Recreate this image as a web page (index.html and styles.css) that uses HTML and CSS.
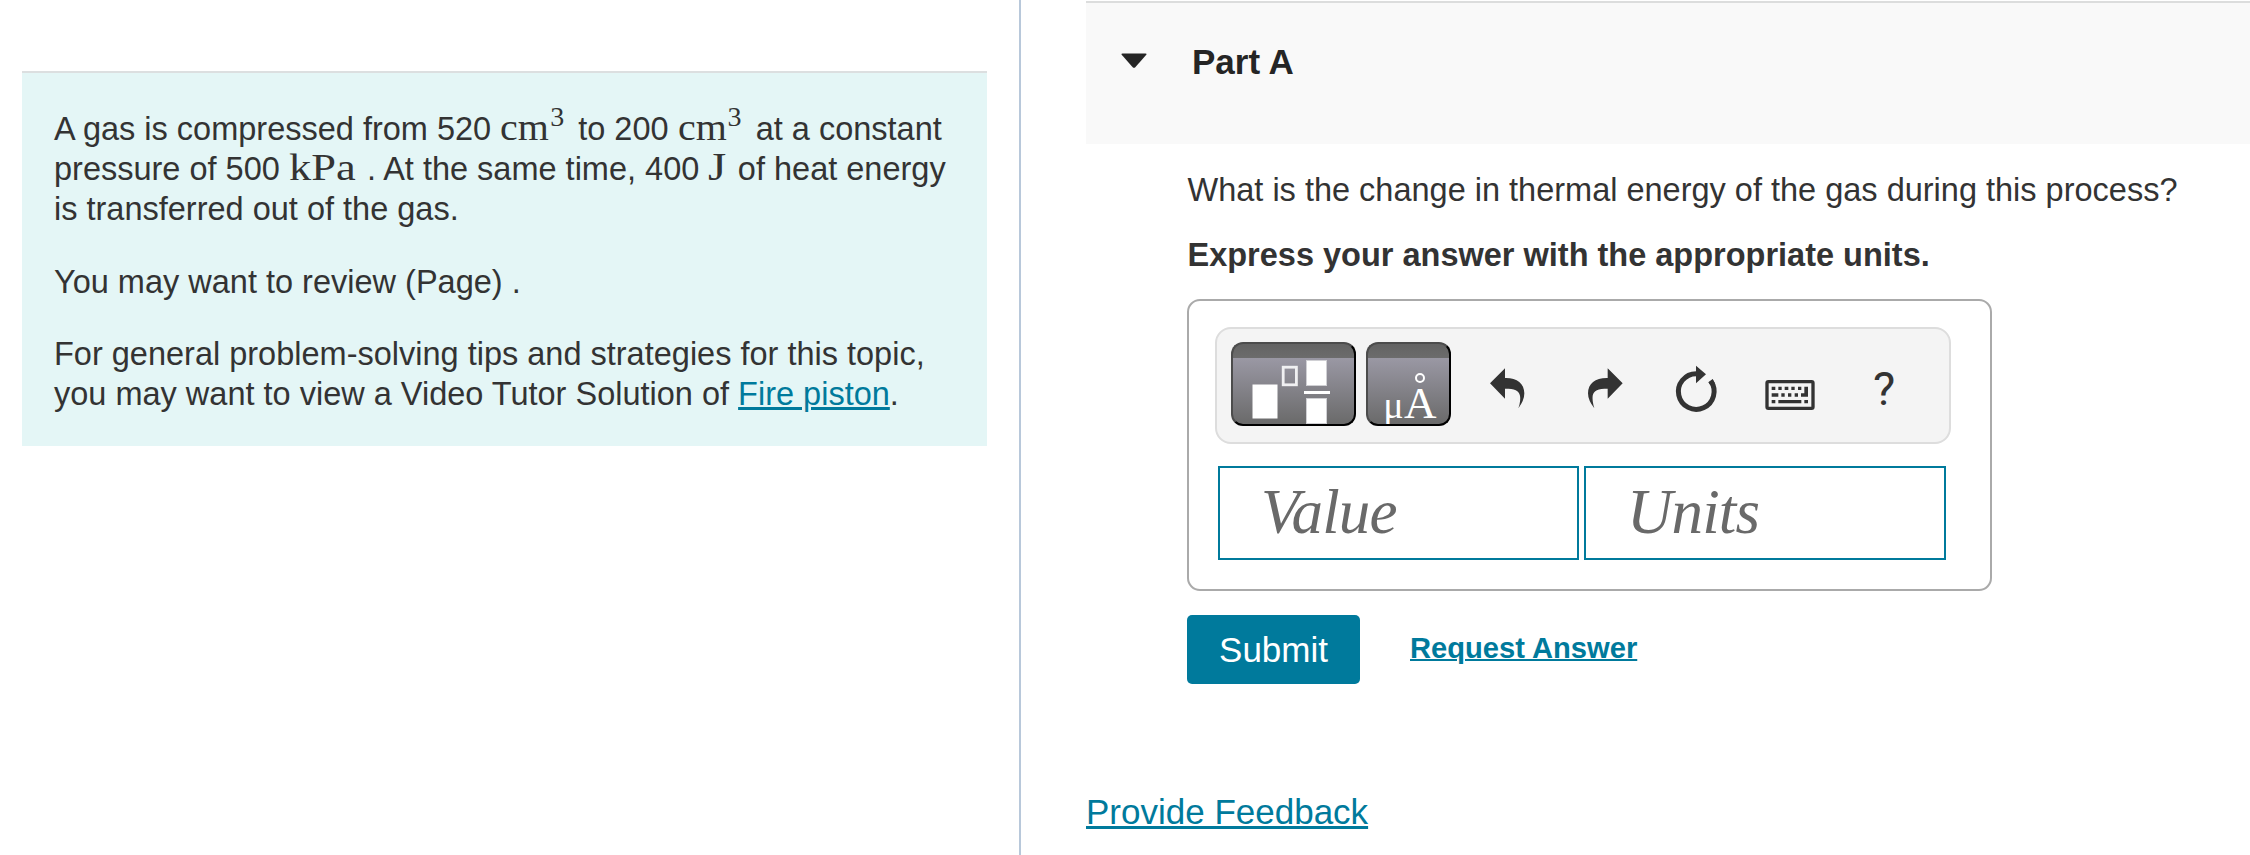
FILE: index.html
```html
<!DOCTYPE html>
<html lang="en">
<head>
<meta charset="utf-8">
<title>Part A</title>
<link rel="stylesheet" href="styles.css">
</head>
<body>
<main class="page">
  <aside class="left">
    <section class="intro">
      <p>A gas is compressed from 520 <span class="math cm"><span>cm</span><sup>3</sup></span> to 200 <span class="math cm"><span>cm</span><sup>3</sup></span> at a constant<br>pressure of 500 <span class="math kpa"><span>kPa</span></span> . At the same time, 400 <span class="math joule"><span>J</span></span> of heat energy<br>is transferred out of the gas.</p>
      <p>You may want to review (Page) .</p>
      <p>For general problem-solving tips and strategies for this topic,<br>you may want to view a Video Tutor Solution of <a href="#">Fire piston</a>.</p>
    </section>
  </aside>
  <section class="right">
    <header class="part-head">
      <svg class="caret" width="26" height="16" viewBox="0 0 26 16"><path d="M1.5 0.5h23q1.8 0 .6 1.6L14.3 14.2q-1.3 1.2-2.6 0L.9 2.1Q-.3.5 1.5.5z" fill="#252525"/></svg>
      <h2>Part A</h2>
    </header>
    <div class="part-body">
      <p class="question">What is the change in thermal energy of the gas during this process?</p>
      <p class="instruction">Express your answer with the appropriate units.</p>
      <div class="answer">
        <div class="toolbar">
          <button class="tool templates" aria-label="Templates">
            <svg width="121" height="80" viewBox="2 2 121 80">
              <g fill="#fff" stroke="#d0d0d4" stroke-width="1">
                <rect x="21.5" y="42.5" width="25" height="34" stroke="none"/>
                <rect x="75.5" y="18.5" width="20" height="25"/>
                <rect x="75.5" y="56.5" width="20" height="25"/>
              </g>
              <rect x="73" y="49" width="26" height="3" fill="#fff"/>
              <rect x="52.2" y="25.2" width="13.2" height="17.6" fill="none" stroke="#f0f0f2" stroke-width="2.8"/>
            </svg>
          </button>
          <button class="tool symbols" aria-label="Symbols"><span class="mu">μ</span><span class="ang">A<i></i></span></button>
          <svg class="icon undo" viewBox="60 66 180 252"><path d="M90 190L135 145V174C170 173 193 190 193 220Q193 241 175 265Q183 242 180 227C177 211 164 206 135 206V236Z"/></svg>
          <svg class="icon redo" viewBox="345 66 180 252"><path d="M488 190L443 145V174C407 173 384 190 384 220Q384 241 403 265Q396 242 398 227C401 211 414 206 443 206V236Z"/></svg>
          <svg class="icon refresh" viewBox="621 66 180 252"><path d="M709 161A53.5 53.5 0 1 0 752 183" fill="none" stroke="#333" stroke-width="15"/><path d="M708 137L738 163L708 190ZM745 187L758 177L765 190L752 196Z"/></svg>
          <svg class="icon keyboard" viewBox="120 156 180 252"><rect x="141" y="275" width="138" height="80" rx="4" fill="none" stroke="#333" stroke-width="10"/><path d="M155 290h11v10h-11zM175 290h10v10h-10zM194 290h11v10h-11zM214 290h10v10h-10zM234 290h10v10h-10zM253 290h11v30h-21v-10h10zM155 310h20v10h-20zM184 310h10v10h-10zM204 310h10v10h-10zM224 310h10v10h-10zM155 330h11v10h-11zM175 330h69v10h-69zM253 330h11v10h-11z"/></svg>
          <span class="help">?</span>
        </div>
        <div class="fields">
          <div class="field">Value</div>
          <div class="field">Units</div>
        </div>
      </div>
      <div class="actions">
        <button class="submit">Submit</button>
        <a class="request" href="#">Request Answer</a>
      </div>
    </div>
    <a class="feedback" href="#">Provide Feedback</a>
  </section>
</main>
</body>
</html>
```
FILE: styles.css
```css
* { box-sizing: border-box; }
body {
  margin: 0;
  background: #fff;
  color: #333;
  font-family: "Liberation Sans", Arial, sans-serif;
  font-size: 32.5px;
  line-height: 40px;
  overflow: hidden;
}
p, h2 { margin: 0; white-space: nowrap; }
a { color: #007a9c; }
.page { display: flex; height: 855px; }
.left {
  width: 1021px;
  flex: none;
  padding: 71px 32px 0 22px;
  border-right: 2px solid #b8c8da;
}
.intro {
  height: 375px;
  padding: 36px 32px 0;
  background: #e4f6f6;
  border-top: 2px solid #dcdfe0;
}
.intro p { margin-bottom: 32.5px; }
.intro a { text-decoration-thickness: 3px; }
.math {
  display: inline-block;
  font-family: "Liberation Serif", serif;
  font-size: 38px;
  line-height: 0;
}
.math span {
  display: inline-block;
  transform-origin: 0 50%;
}
.math sup {
  display: inline-block;
  font-size: 28px;
  line-height: 0;
  vertical-align: 14px;
}
.cm { width: 69px; }
.cm span { width: 50px; font-size: 37px; transform: scaleX(1.08); }
.kpa { width: 69px; }
.kpa span { transform: scaleX(1.17); }
.joule { width: 20.5px; font-size: 39px; }
.joule span { transform: scaleX(1.2); }

.right { flex: 1; padding: 1px 0 0 65px; min-width: 0; }
.part-head {
  height: 143px;
  display: flex;
  align-items: flex-start;
  padding: 39px 0 0 35px;
  background: #f9f9f9;
  border-top: 2px solid #dcdddd;
}
.caret { margin: 11px 45px 0 0; }
h2 { font-size: 35px; line-height: 40px; color: #252525; }
.part-body { padding: 26px 0 0 101px; }
.question, .instruction { padding-left: .5px; }
.instruction { margin-top: 25px; font-weight: bold; }
.answer {
  width: 805px;
  height: 292px;
  margin-top: 24px;
  padding: 26px 0 0 26px;
  border: 2px solid #aaa;
  border-radius: 13px;
}
.toolbar {
  width: 736px;
  height: 117px;
  display: flex;
  padding: 13px 0 0 14px;
  background: #f4f4f4;
  border: 2px solid #ddd;
  border-radius: 16px;
}
.tool {
  height: 84px;
  flex: none;
  padding: 0;
  border: 2px solid;
  border-color: #4c4c4c #000 #000 #4c4c4c;
  border-radius: 12px;
  background: linear-gradient(#636363, #6c6c6c) 0 0 / 100% 14px no-repeat,
              linear-gradient(#9a98a4 14px, #6a6a6a);
}
.tool svg { display: block; }
.templates { width: 125px; margin-right: 10px; }
.symbols {
  width: 85px;
  display: flex;
  align-items: baseline;
  padding: 34px 0 0 15px;
  overflow: hidden;
  color: #fff;
  font-family: "Liberation Serif", serif;
  line-height: 50px;
}
.mu { font-size: 38px; width: 21px; }
.ang { position: relative; font-size: 45px; }
.ang i {
  position: absolute;
  left: 11px;
  top: -5.5px;
  width: 10px;
  height: 10px;
  border: 2px solid #fff;
  border-radius: 50%;
}
.icon { width: 60px; height: 84px; flex: none; fill: #333; }
.undo { margin-left: 29px; }
.redo { margin-left: 35px; }
.refresh { margin-left: 32px; }
.keyboard { margin-left: 33px; }
.help { margin: 27px 0 0 53px; font-size: 47px; font-family: "Roboto", sans-serif; }
.fields { display: flex; gap: 5px; padding: 22px 0 0 3px; }
.field {
  width: 361px;
  height: 94px;
  padding: 0 0 0 41px;
  border: 2px solid #007a9c;
  color: #696969;
  font: italic 63px/88px "Liberation Serif", serif;
  letter-spacing: -.9px;
}
.field + .field { width: 362px; }
.actions { display: flex; margin-top: 24px; }
.submit {
  width: 173px;
  height: 69px;
  border: 0;
  border-radius: 5px;
  background: #007a9c;
  color: #fff;
  font: 35px/40px "Liberation Sans", sans-serif;
}
.request {
  margin: 13px 0 0 50px;
  font-size: 29.15px;
  font-weight: bold;
  text-decoration-thickness: 2px;
}
.feedback {
  display: inline-block;
  margin-top: 108px;
  font-size: 35px;
  text-decoration-thickness: 3px;
}
```
